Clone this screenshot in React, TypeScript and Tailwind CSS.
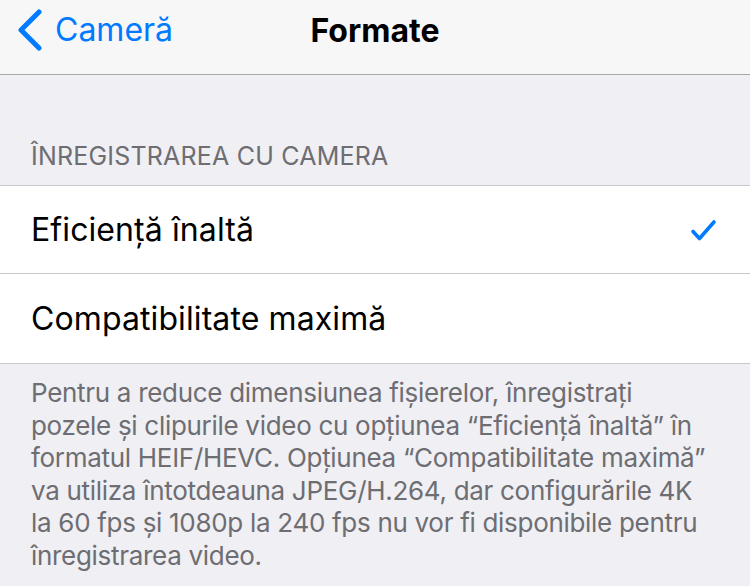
import React from "react";

const footerLines = [
  "Pentru a reduce dimensiunea fișierelor, înregistrați",
  "pozele și clipurile video cu opțiunea “Eficiență înaltă” în",
  "formatul HEIF/HEVC. Opțiunea “Compatibilitate maximă”",
  "va utiliza întotdeauna JPEG/H.264, dar configurările 4K",
  "la 60 fps și 1080p la 240 fps nu vor fi disponibile pentru",
  "înregistrarea video.",
];

function Check() {
  return (
    <svg width="28" height="24" viewBox="0 0 28 24" fill="none">
      <path
        d="M3 13.5 L9.5 20.5 L24 4"
        stroke="#007aff"
        strokeWidth="3.6"
        strokeLinecap="round"
        strokeLinejoin="round"
      />
    </svg>
  );
}

export default function App() {
  return (
    <div className="w-[750px] h-[586px] overflow-hidden bg-[#efeff4] font-['Inter',sans-serif]">
      <header className="relative h-[75px] bg-[#f7f7f8] border-b border-[#a7a7aa] flex items-center pb-[14px]">
        <button className="flex items-center pl-[17px] text-[#007aff]">
          <svg width="26" height="42" viewBox="0 0 26 42" fill="none">
            <path
              d="M22 3 L4 21 L22 39"
              stroke="#007aff"
              strokeWidth="5"
              strokeLinecap="round"
              strokeLinejoin="round"
            />
          </svg>
          <span className="ml-[12px] text-[32px] leading-none">Cameră</span>
        </button>
        <h1 className="absolute left-0 right-0 top-[15px] text-center text-[32px] font-bold leading-none text-black pointer-events-none">
          Formate
        </h1>
      </header>

      <div className="h-[110px] flex items-end pl-[31px] pb-[16px]">
        <span className="text-[25px] leading-none text-[#6d6d72] tracking-[0.2px]">
          ÎNREGISTRAREA CU CAMERA
        </span>
      </div>

      <div className="bg-white border-y border-[#c8c7cc]">
        <div className="h-[88px] flex items-center justify-between pl-[31px] pr-[32px] border-b border-[#c8c7cc]">
          <span className="text-[32px] text-black tracking-[0.1px]">Eficiență înaltă</span>
          <Check />
        </div>
        <div className="h-[89px] flex items-center pl-[31px]">
          <span className="text-[32px] text-black tracking-[0.1px]">Compatibilitate maximă</span>
        </div>
      </div>

      <p className="pl-[31px] pt-[13px] text-[26px] leading-[32.5px] text-[#6d6d72] tracking-[-0.3px] whitespace-nowrap">
        {footerLines.map((line) => (
          <span key={line} className="block">
            {line}
          </span>
        ))}
      </p>
    </div>
  );
}
